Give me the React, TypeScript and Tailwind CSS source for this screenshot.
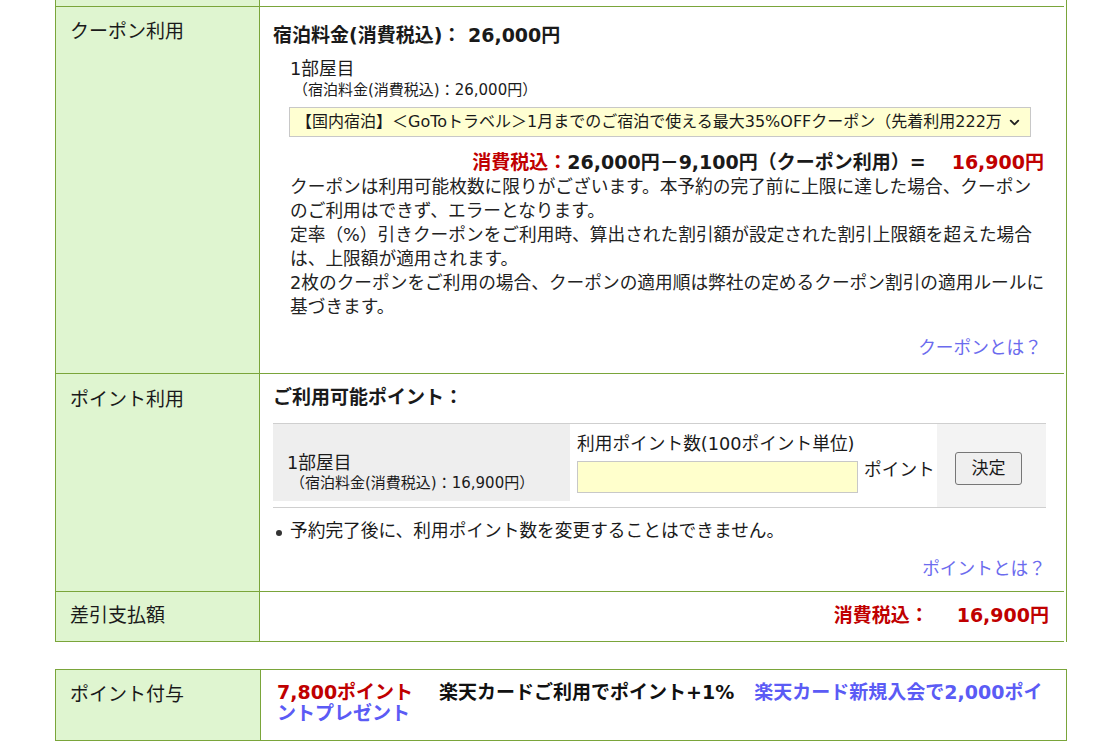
import { ChevronDown } from 'lucide-react';

const couponNotes = [
  'クーポンは利用可能枚数に限りがございます。本予約の完了前に上限に達した場合、クーポン',
  'のご利用はできず、エラーとなります。',
  '定率（%）引きクーポンをご利用時、算出された割引額が設定された割引上限額を超えた場合',
  'は、上限額が適用されます。',
  '2枚のクーポンをご利用の場合、クーポンの適用順は弊社の定めるクーポン割引の適用ルールに',
  '基づきます。',
];

function Label({ children, pt }: { children: React.ReactNode; pt: string }) {
  return (
    <div
      className={`w-[204px] shrink-0 bg-[#dff5d0] border-r border-[#7aa53a] pl-[14px] text-[19px] leading-[24px] text-[#1a1a1a] ${pt}`}
    >
      {children}
    </div>
  );
}

export default function App() {
  return (
    <div className="min-h-screen bg-white font-['DejaVu_Sans','Noto_Sans_CJK_JP',sans-serif] text-[#1a1a1a]">
      {/* payment table */}
      <div className="ml-[55px] w-[1012px] border-x border-[#7aa53a]">
        <div className="mr-[2px]">
          {/* previous row (cut off) */}
          <div className="flex h-[7px] border-b border-[#7aa53a]">
            <div className="w-[204px] bg-[#dff5d0] border-r border-[#7aa53a]" />
          </div>

          {/* coupon */}
          <div className="flex border-b border-[#7aa53a]">
            <Label pt="pt-[12px]">クーポン利用</Label>
            <div className="flex-1 pl-[13px] pr-[18px] pt-[16px] pb-[13px]">
              <div className="text-[19px] font-bold leading-[24px]">宿泊料金(消費税込)：&nbsp;26,000円</div>
              <div className="pl-[17px] mt-[10px]">
                <div className="text-[17.7px] leading-[24px]">1部屋目</div>
                <div className="pl-[3px] text-[15px] leading-[18px]">（宿泊料金(消費税込)：26,000円）</div>
                <div className="mt-[8px] -ml-px w-[742px] h-[30px] flex items-center bg-[#ffffd2] border border-[#c8c8c8] pl-[6px] pr-[8px]">
                  <span className="flex-1 overflow-hidden whitespace-nowrap text-[16px] leading-[20px]">
                    【国内宿泊】＜GoToトラベル＞1月までのご宿泊で使える最大35%OFFクーポン（先着利用222万枚）
                  </span>
                  <ChevronDown size={15} strokeWidth={3} className="ml-[6px] shrink-0 text-[#222]" />
                </div>
                <div className="mt-[13px] pr-[2px] text-right text-[19px] font-bold leading-[24px]">
                  <span className="text-[#c00000]">消費税込：</span>
                  <span>26,000円－9,100円（クーポン利用）=</span>
                  <span className="pl-[26px] text-[#c00000]">16,900円</span>
                </div>
                <div className="mt-[1px] text-[17.7px] leading-[24px] text-[#222] whitespace-nowrap">
                  {couponNotes.map((line) => (
                    <div key={line}>{line}</div>
                  ))}
                </div>
                <div className="mt-[17px] pr-[4px] text-right text-[17.7px] leading-[24px] text-[#6b6bee]">
                  クーポンとは？
                </div>
              </div>
            </div>
          </div>

          {/* points */}
          <div className="flex border-b border-[#7aa53a]">
            <Label pt="pt-[13px]">ポイント利用</Label>
            <div className="flex-1 pl-[13px] pr-[18px] pt-[11px] pb-[10px]">
              <div className="text-[19px] font-bold leading-[24px]">ご利用可能ポイント：</div>
              <div className="mt-[14px] flex h-[85px] border-y border-[#cfcfcf]">
                <div className="w-[297px] h-[77px] bg-[#eeeeee] pl-[14px] pt-[28px]">
                  <div className="text-[17.7px] leading-[22px]">1部屋目</div>
                  <div className="pl-[3px] text-[15px] leading-[18px]">（宿泊料金(消費税込)：16,900円）</div>
                </div>
                <div className="w-[367px] pl-[7px] pt-[8px]">
                  <div className="text-[17.7px] leading-[24px]">利用ポイント数(100ポイント単位)</div>
                  <div className="mt-[5px] flex items-start">
                    <input
                      className="w-[281px] h-[32px] bg-[#ffffcc] border border-[#c8c8c8] outline-none"
                      aria-label="利用ポイント数"
                    />
                    <span className="ml-[6px] -mt-[3px] text-[17.7px] leading-[24px]">ポイント</span>
                  </div>
                </div>
                <div className="flex-1 bg-[#f3f3f3] pl-[18px] pt-[28px]">
                  <button className="w-[67px] h-[33px] border border-[#767676] rounded-[3px] bg-[#efefef] text-[17px] leading-none">
                    決定
                  </button>
                </div>
              </div>
              <div className="mt-[11px] flex items-center">
                <span className="ml-[3px] mr-[8px] mt-[4px] w-[6px] h-[6px] rounded-full bg-[#333]" />
                <span className="text-[17.7px] leading-[24px]">予約完了後に、利用ポイント数を変更することはできません。</span>
              </div>
              <div className="mt-[14px] text-right text-[17.7px] leading-[24px] text-[#6b6bee]">ポイントとは？</div>
            </div>
          </div>

          {/* balance */}
          <div className="flex h-[50px] border-b border-[#7aa53a]">
            <Label pt="pt-[11px]">差引支払額</Label>
            <div className="flex-1 pr-[15px] pt-[11px] text-right text-[19px] font-bold leading-[24px] text-[#c00000]">
              消費税込：<span className="pl-[28px]">16,900円</span>
            </div>
          </div>
        </div>
      </div>

      {/* point grant */}
      <div className="mt-[27px] ml-[55px] w-[1012px] h-[72px] flex border border-[#7aa53a]">
        <div className="w-[205px] shrink-0 bg-[#dff5d0] border-r border-[#7aa53a] pl-[14px] pt-[12px] text-[19px] leading-[24px]">
          ポイント付与
        </div>
        <div className="flex-1 pl-[16px] pr-[16px] pt-[12px] text-[19px] font-bold leading-[21px]">
          <span className="mr-[26px] text-[#c00000]">7,800ポイント</span>
          <span className="mr-[20px] text-[#111]">楽天カードご利用でポイント+1%</span>
          <span className="text-[#5b5bf5]">楽天カード新規入会で2,000ポイントプレゼント</span>
        </div>
      </div>
    </div>
  );
}
